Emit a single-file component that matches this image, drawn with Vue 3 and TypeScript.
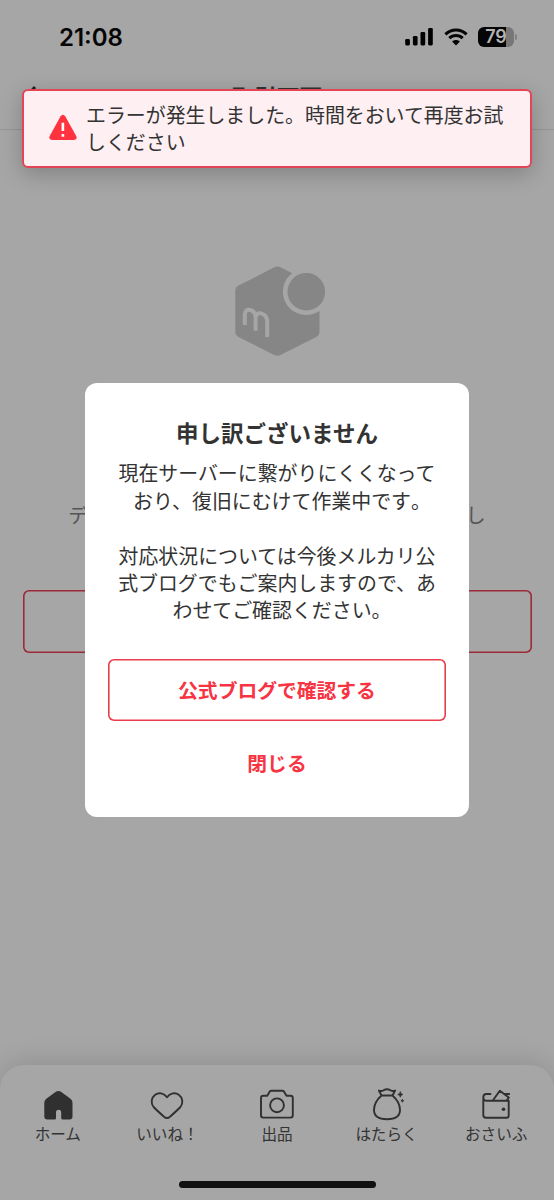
<script setup lang="ts">
interface Tab {
  id: string
  label: string
}

const tabs: Tab[] = [
  { id: 'home', label: 'ホーム' },
  { id: 'likes', label: 'いいね！' },
  { id: 'sell', label: '出品' },
  { id: 'work', label: 'はたらく' },
  { id: 'wallet', label: 'おさいふ' },
]

const toastLines: string[] = ['エラーが発生しました。時間をおいて再度お試', 'しください']

interface Line {
  text: string
  stop?: boolean
}

const paragraphs: Line[][] = [
  [{ text: '現在サーバーに繋がりにくくなって' }, { text: 'おり、復旧にむけて作業中です', stop: true }],
  [
    { text: '対応状況については今後メルカリ公' },
    { text: '式ブログでもご案内しますので、あ' },
    { text: 'わせてご確認ください', stop: true },
  ],
]
</script>

<template>
  <div class="screen">
    <header class="status">
      <span class="time">21:08</span>
      <div class="indicators">
        <svg class="signal" width="29" height="18" viewBox="0 0 29 18">
          <rect x="0.2" y="11" width="4.7" height="6.4" rx="1.3" />
          <rect x="7.9" y="8" width="4.7" height="9.4" rx="1.3" />
          <rect x="15.5" y="4" width="4.7" height="13.4" rx="1.3" />
          <rect x="23.1" y="0" width="4.7" height="17.4" rx="1.3" />
        </svg>
        <svg class="wifi" width="24" height="18" viewBox="0 0 24 18">
          <path d="M1.400 6.300C7.300.5 16.700.5 22.600 6.300" />
          <path d="M5.300 10.200c3.700-3.600 9.700-3.600 13.400 0" />
          <path class="dot" d="M8.100 13.500c2.200-2 5.600-2 7.800 0L12 17.400z" />
        </svg>
        <div class="battery"><span>79</span></div>
        <i class="nub"></i>
      </div>
    </header>

    <div class="titlebar">
      <svg class="back" width="14" height="24" viewBox="0 0 14 24">
        <path d="M11 2 2 12l9 10" />
      </svg>
      <h1>取引画面</h1>
    </div>

    <main class="content">
      <svg class="logo" width="94" height="94" viewBox="0 0 94 94">
        <defs>
          <mask id="badge-gap">
            <rect width="94" height="94" fill="#fff" />
            <circle cx="73.3" cy="28.7" r="23.4" fill="#000" />
          </mask>
        </defs>
        <path
          mask="url(#badge-gap)"
          d="M41.300 4.300q3-1.600 6.200 0L83.200 22.600q3.300 1.700 3.300 5.400v40.500q0 3.700-3.300 5.400L47.500 92q-3.200 1.600-6.200 0L5.600 73.900q-3.300-1.700-3.300-5.400V28q0-3.700 3.300-5.400z"
        />
        <circle cx="73.3" cy="28.7" r="18.8" />
        <path
          class="mark"
          d="M11.800 62V51.500c0-3.600 2.300-5.300 5.300-4.500 3.400.9 5.500 3.800 5.500 7.500v13.200M22.600 55.500c0-4 2.400-6 5.500-5.100 3.700 1 6.100 4 6.100 8.100V74"
        />
      </svg>
      <p class="notice">データの取得に失敗しました。もう一度お試し<br />ください</p>
      <button class="retry" type="button"></button>
    </main>

    <nav class="tabs">
      <a v-for="tab in tabs" :key="tab.id" class="tab">
        <svg width="40" height="36" viewBox="0 0 40 36">
          <path
            v-if="tab.id === 'home'"
            class="solid"
            d="M17.500 7.100q2.900-2.200 5.800 0l9.200 6.700q2 1.500 2 3.900v13.800q0 3-3 3h-6.800q-1.500 0-1.500-1.500v-5.600q0-2.600-2.600-2.600t-2.600 2.600V33q0 1.500-1.500 1.500H9.300q-3 0-3-3V17.700q0-2.400 2-3.900z"
          />
          <path
            v-else-if="tab.id === 'likes'"
            d="M20 12.200C17 7.800 11.700 7.200 8.200 9.700 4.200 12.600 3.500 18.300 6.600 22q2.200 2.500 10.400 9.700 3 2.500 6 0Q31.200 24.500 33.400 22c3.100-3.700 2.400-9.400-1.600-12.300C28.300 7.200 23 7.800 20 12.200z"
          />
          <g v-else-if="tab.id === 'sell'">
            <path
              d="M10.300 10.700h-4q-2.300 0-2.300 2.300v17.300q0 2.300 2.300 2.300h27.200q2.300 0 2.300-2.300V13q0-2.300-2.300-2.300h-4l-2.400-4q-.6-.9-1.700-.9H14.300q-1.100 0-1.700.9z"
            />
            <circle cx="20" cy="20.300" r="6.900" />
          </g>
          <g v-else-if="tab.id === 'work'">
            <path
              d="M14.500 10.500 11.900 5.500q2.500 1.200 4.700-.3 3.400-2 6.800 0 2.200 1.500 4.700.3l-2.600 5zM14.500 10.500C10 14.500 7 19.500 7 25c0 6.500 4.500 9.200 13 9.200s13-2.700 13-9.200c0-5.500-3-10.500-7.500-14.500"
            />
            <path
              class="spark"
              d="M33.300 6.900q.4 2.300 2.600 2.600-2.200.4-2.600 2.700-.4-2.300-2.600-2.700 2.200-.3 2.600-2.600zM35.400 14.400q.2 1.300 1.400 1.400-1.200.2-1.400 1.400-.3-1.200-1.500-1.400 1.200-.1 1.500-1.400z"
            />
          </g>
          <g v-else>
            <path
              d="M14.500 9H10.500Q7.300 9 7.300 12.300V30q0 2.700 2.700 2.700h20.700q2 0 2-2V15.800H10.700q-3.400 0-3.400-3.500M17 15.300l6.800-9.500 9 6.800-2.200 3M28.500 9h4.700"
            />
            <circle class="solid" cx="27.500" cy="24.300" r="1.800" />
          </g>
        </svg>
        <span>{{ tab.label }}</span>
      </a>
      <i class="indicator"></i>
    </nav>

    <section class="dialog" role="dialog">
      <h2>申し訳ございません</h2>
      <p v-for="(lines, p) in paragraphs" :key="p">
        <span v-for="(line, n) in lines" :key="n" class="line"
          >{{ line.text }}<b v-if="line.stop" class="stop">。</b></span
        >
      </p>
      <button class="primary" type="button">公式ブログで確認する</button>
      <button class="close" type="button">閉じる</button>
    </section>

    <aside class="toast" role="alert">
      <svg width="30" height="28" viewBox="0 0 30 28">
        <path
          class="solid"
          d="M12.600 2.200q2.300-3 4.600 0l11 19.700q1.600 3.800-2.200 4.100H4q-3.900-.3-2.300-4.100z"
        />
        <path class="bang" d="M14.900 8.800v8.200M14.900 20v2.700" />
      </svg>
      <div>
        <span v-for="line in toastLines" :key="line" class="line">{{ line }}</span>
      </div>
    </aside>
  </div>
</template>

<style>
body {
  margin: 0;
  background: #a6a6a6;
}
</style>

<style scoped>
* {
  box-sizing: border-box;
}
.screen {
  position: relative;
  display: flex;
  flex-direction: column;
  width: 554px;
  height: 1200px;
  overflow: hidden;
  background: #a6a6a6;
  color: #333;
  font-family: 'Noto Sans CJK JP', sans-serif;
  font-size: 19.92px;
  line-height: 27.4px;
  text-spacing-trim: space-all;
}
svg {
  flex: none;
  display: block;
}
button {
  padding: 0;
  background: none;
  border: 0;
  font: inherit;
  font-weight: 700;
  font-size: 19.8px;
  color: #f83342;
}
.line {
  display: block;
  white-space: nowrap;
}
.status {
  display: flex;
  justify-content: space-between;
  height: 74px;
  padding: 0 37px 0 59px;
  color: #050505;
}
.time {
  font: 600 24px/76px Inter, sans-serif;
}
.indicators {
  display: flex;
  align-items: center;
}
.signal {
  margin-right: 10px;
}
.wifi {
  margin-right: 10px;
  fill: none;
  stroke: #050505;
  stroke-width: 3.1;
}
.wifi .dot {
  fill: #050505;
  stroke: none;
}
.battery {
  width: 36px;
  height: 20px;
  border-radius: 6px;
  background: linear-gradient(90deg, #050505 78%, #777 78%);
  color: #b4b4b4;
  font: 600 18px/20px Inter, sans-serif;
  text-align: center;
}
.nub {
  width: 2px;
  height: 6px;
  margin-left: 1px;
  border-radius: 0 2px 2px 0;
  background: #808080;
}
.titlebar {
  display: grid;
  grid-template-columns: 80px 1fr 80px;
  align-items: center;
  height: 56px;
  border-bottom: 1px solid #969696;
}
.back {
  margin-left: 24px;
  margin-top: -10px;
  fill: none;
  stroke: #222;
  stroke-width: 3;
}
h1 {
  margin: -11px 0 0;
  font-size: 22.5px;
  line-height: 32px;
  text-align: center;
}
.content {
  flex: 1;
  display: flex;
  flex-direction: column;
  align-items: center;
  padding: 133px 22px 0;
}
.logo {
  margin-left: 6px;
  fill: #868686;
}
.logo .mark {
  fill: none;
  stroke: #a6a6a6;
  stroke-width: 4;
}
.notice {
  margin: 144px 0 0;
  color: #555;
  text-align: center;
  white-space: nowrap;
}
.retry {
  width: 509px;
  height: 63px;
  margin-top: 34px;
  border-radius: 6px;
  box-shadow: inset 0 0 0 1.6px #9a2b37;
}
.tabs {
  position: relative;
  display: grid;
  grid-template-columns: repeat(5, 1fr);
  height: 135px;
  padding: 20px 3px 0;
  border-radius: 24px 24px 0 0;
  background: #a6a6a6;
  box-shadow: 0 -2px 28px rgba(0, 0, 0, 0.14);
}
.tab {
  display: flex;
  flex-direction: column;
  align-items: center;
  font-size: 15.6px;
  line-height: 24px;
  white-space: nowrap;
}
.tab svg {
  fill: none;
  stroke: #303030;
  stroke-width: 1.9;
  stroke-linejoin: round;
  stroke-linecap: round;
}
.tab .solid,
.tab .spark {
  fill: #303030;
  stroke: none;
}
.tab .spark {
  stroke: #303030;
  stroke-width: 0.7;
}
.indicator {
  position: absolute;
  left: 50%;
  bottom: 12px;
  width: 197px;
  height: 7px;
  margin-left: -98.5px;
  border-radius: 4px;
  background: #111;
}
.dialog {
  position: absolute;
  top: 383px;
  left: 85px;
  display: flex;
  flex-direction: column;
  align-items: center;
  width: 384px;
  height: 434px;
  padding: 33px 22px 0;
  border-radius: 12px;
  background: #fff;
  text-align: center;
}
h2 {
  margin: 0 0 11.4px;
  font-size: 22.5px;
  line-height: 32px;
}
.dialog p {
  margin: 0 0 27.4px;
}
.stop {
  display: inline-block;
  width: 0.5em;
  font-weight: 400;
}
.primary {
  flex: none;
  width: 338px;
  height: 62px;
  margin-top: 7.6px;
  border-radius: 6px;
  box-shadow: inset 0 0 0 1.6px #ea3c4a;
}
.close {
  margin-top: 28px;
  line-height: 28px;
}
.toast {
  position: absolute;
  top: 89px;
  left: 22px;
  display: flex;
  align-items: center;
  gap: 8px;
  width: 510px;
  height: 79px;
  padding: 0 0 1px 24px;
  border: 2px solid #e24656;
  border-radius: 6px;
  background: #fdeff2;
  box-shadow: 0 6px 22px rgba(0, 0, 0, 0.22);
}
.toast .solid {
  fill: #ff333f;
}
.toast .bang {
  stroke: #fff;
  stroke-width: 2.6;
}
</style>
